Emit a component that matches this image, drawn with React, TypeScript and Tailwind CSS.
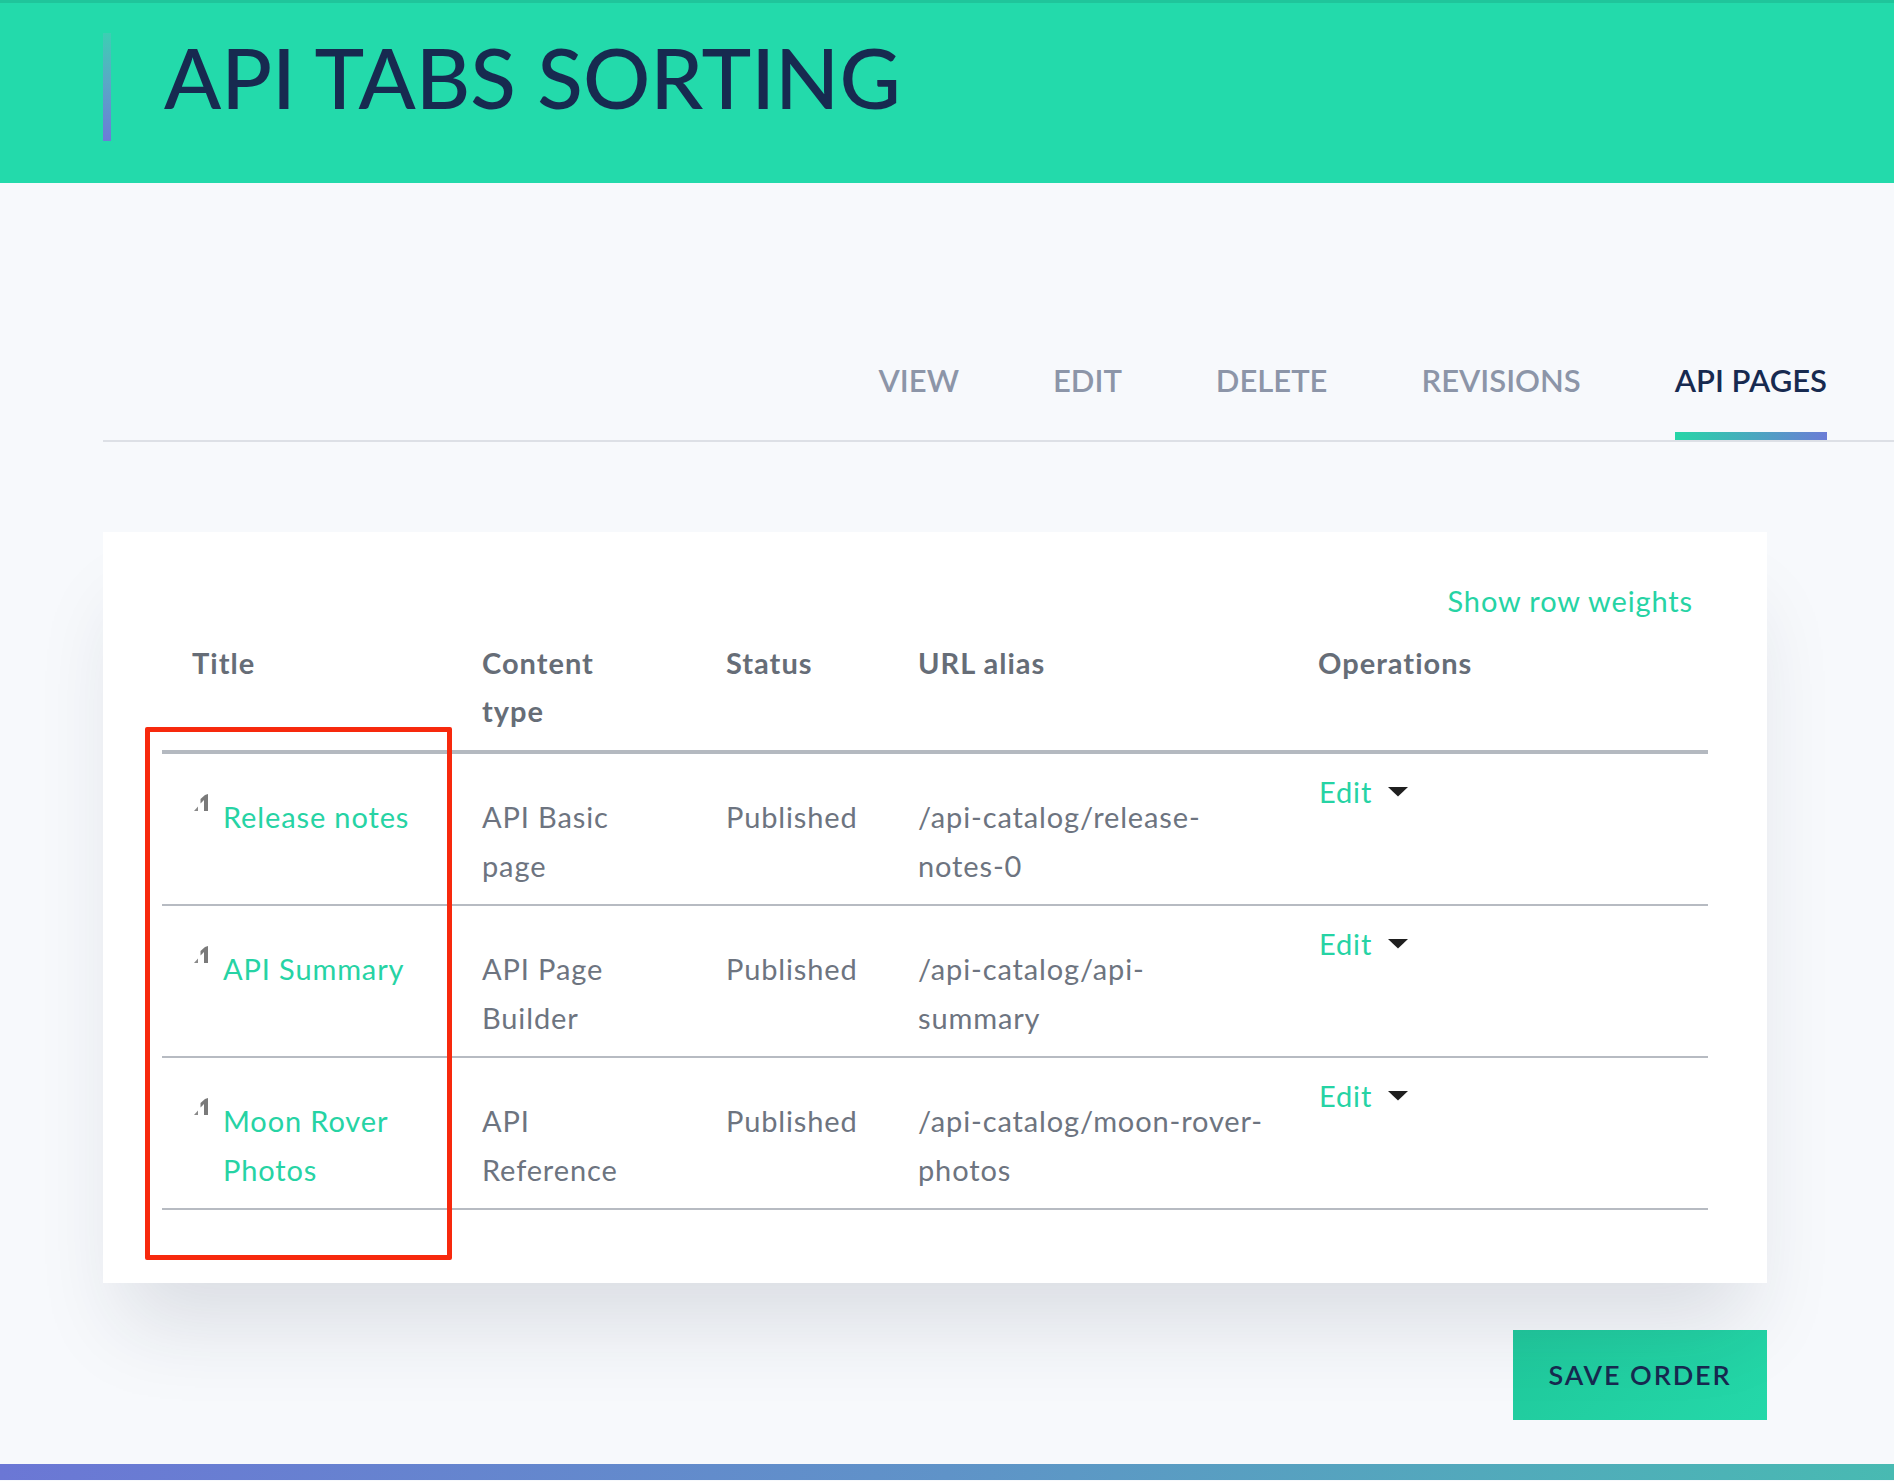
import React from "react";

const GREEN_TEXT = "text-[#26d3a4]";

function Handle() {
  return (
    <svg width="16" height="18" viewBox="0 0 16 18" className="shrink-0 mt-[1px]">
      <path d="M15 1 L15 18 L11 18 L11 7 L7.5 10.5 L7.5 6 L12 2 Z" fill="#7a7a7a" />
      <path d="M1 18 L5 13.5 L5 18 Z" fill="#8a8a8a" />
    </svg>
  );
}

function Caret() {
  return (
    <svg width="20" height="10" viewBox="0 0 20 10" className="ml-[16px] mt-[20px] shrink-0">
      <path d="M0 0 L20 0 L10 9.5 Z" fill="#1f1f1f" />
    </svg>
  );
}

type Row = { title: string[]; type: string[]; url: string[] };

const rows: Row[] = [
  { title: ["Release notes"], type: ["API Basic", "page"], url: ["/api-catalog/release-", "notes-0"] },
  { title: ["API Summary"], type: ["API Page", "Builder"], url: ["/api-catalog/api-", "summary"] },
  { title: ["Moon Rover", "Photos"], type: ["API", "Reference"], url: ["/api-catalog/moon-rover-", "photos"] },
];

const cols = "grid grid-cols-[290px_244px_192px_400px_420px]";

function Lines({ lines }: { lines: string[] }) {
  return (
    <div className="flex flex-col">
      {lines.map((l) => (
        <span key={l} className="whitespace-nowrap">
          {l}
        </span>
      ))}
    </div>
  );
}

export default function App() {
  return (
    <div
      className="min-h-screen w-full bg-[#f7f9fc] flex flex-col overflow-hidden"
      style={{ fontFamily: "Lato, 'Noto Sans', sans-serif" }}
    >
      {/* Header */}
      <header className="h-[183px] bg-[#23daab] border-t-[3px] border-[#1fc59b] flex items-start pl-[103px]">
        <div className="mt-[30px] h-[108px] w-[8px] bg-[linear-gradient(to_bottom,#3ccfb3_0%,#5aa8c6_45%,#6c7bd8_100%)]" />
        <h1 className="mt-[32px] ml-[53px] text-[84px] leading-none font-medium text-[#172a50] tracking-normal whitespace-nowrap">
          API TABS SORTING
        </h1>
      </header>

      {/* Tabs */}
      <nav className="ml-[103px] border-b-2 border-[#dde0e6] flex justify-end gap-[94px] pr-[67px] pt-[182px]">
        {[
          { t: "VIEW", a: false },
          { t: "EDIT", a: false },
          { t: "DELETE", a: false },
          { t: "REVISIONS", a: false },
          { t: "API PAGES", a: true },
        ].map((tab) => (
          <div key={tab.t} className="flex flex-col">
            <span
              className={`text-[31px] leading-none font-semibold tracking-normal whitespace-nowrap ${
                tab.a ? "text-[#172a50]" : "text-[#8c95a8]"
              }`}
            >
              {tab.t}
            </span>
            <div
              className={`mt-[36px] h-[8px] w-full ${
                tab.a ? "bg-[linear-gradient(to_right,#26d6a7,#6b7cd6)]" : "bg-transparent"
              }`}
            />
          </div>
        ))}
      </nav>

      {/* Card */}
      <section className="relative mt-[90px] ml-[103px] mr-[127px] bg-white shadow-[0_60px_80px_-20px_rgba(30,40,60,0.13)] px-[59px] pt-[45px] pb-[73px]">
        <div className={`flex justify-end pr-[15px] text-[29px] tracking-[0.03em] leading-[48px] ${GREEN_TEXT}`}>
          <span>Show row weights</span>
        </div>

        <div className={`${cols} mt-[14px] border-b-4 border-[#b4b9c0] pb-[15px] text-[29px] tracking-[0.035em] leading-[48px] font-bold text-[#666d77]`}>
          <div className="pl-[30px]">Title</div>
          <div className="pl-[30px]">
            <Lines lines={["Content", "type"]} />
          </div>
          <div className="pl-[30px]">Status</div>
          <div className="pl-[30px]">URL alias</div>
          <div className="pl-[30px]">Operations</div>
        </div>

        {rows.map((r) => (
          <div
            key={r.title.join(" ")}
            className={`${cols} border-b-2 border-[#b7bbc2] text-[29px] tracking-[0.03em] leading-[49px] text-[#6d7480]`}
          >
            <div className="pl-[31px] pt-[38px] pb-[14px] flex items-start gap-[14px]">
              <Handle />
              <div className={GREEN_TEXT}>
                <Lines lines={r.title} />
              </div>
            </div>
            <div className="pl-[30px] pt-[38px] pb-[14px]">
              <Lines lines={r.type} />
            </div>
            <div className="pl-[30px] pt-[38px] pb-[14px]">Published</div>
            <div className="pl-[30px] pt-[38px] pb-[14px]">
              <Lines lines={r.url} />
            </div>
            <div className="pl-[31px] pt-[13px] flex items-start">
              <span className={GREEN_TEXT}>Edit</span>
              <Caret />
            </div>
          </div>
        ))}

        {/* annotation box */}
        <div className="absolute left-[42px] top-[195px] w-[307px] h-[533px] border-[5px] border-[#f7290d] rounded-[2px] pointer-events-none" />
      </section>

      {/* Save button */}
      <div className="flex justify-end mr-[127px] mt-[47px]">
        <button className="w-[254px] h-[90px] bg-[linear-gradient(135deg,#20c99c,#24d8a9)] text-[#172a50] text-[27px] font-semibold tracking-[0.07em] flex items-center justify-center">
          SAVE ORDER
        </button>
      </div>

      <div className="mt-[44px] h-[16px] w-full bg-[linear-gradient(to_right,#6b77d5,#5f93c8_50%,#48bab2)]" />
    </div>
  );
}
